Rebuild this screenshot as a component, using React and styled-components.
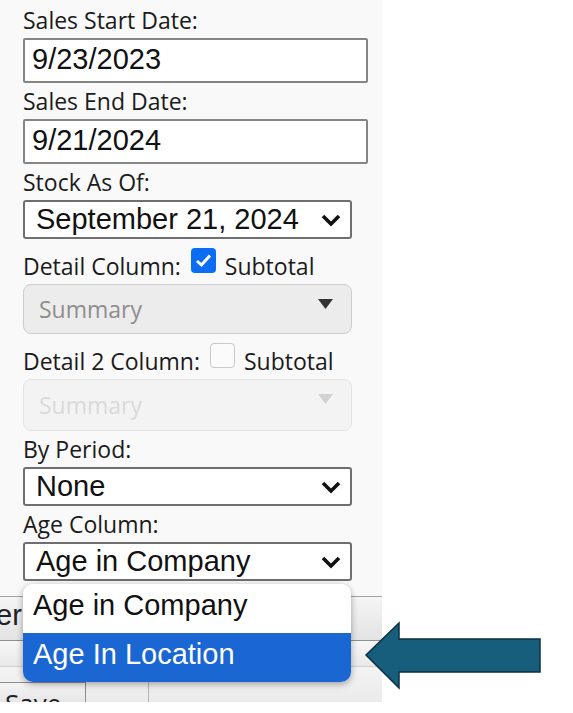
import React from "react";
import styled, { createGlobalStyle } from "styled-components";

const GlobalStyle = createGlobalStyle`
  body {
    margin: 0;
    background: #ffffff;
  }
`;

const Page = styled.div`
  position: relative;
  width: 573px;
  height: 713px;
  overflow: hidden;
  background: #ffffff;
`;

const Panel = styled.div`
  width: 382px;
  height: 702px;
  background: #f9f9f9;
  display: flex;
  flex-direction: column;
  overflow: hidden;
`;

const Form = styled.div`
  display: flex;
  flex-direction: column;
  padding: 7px 0 0 23px;
`;

const Label = styled.div`
  font-family: "Open Sans", "DejaVu Sans", sans-serif;
  font-size: 23px;
  line-height: 27px;
  color: #1b1b1b;
  margin-top: ${(p) => (p.$first ? 0 : 5)}px;
  margin-bottom: 4px;
  white-space: nowrap;
`;

const Check = styled.span`
  display: inline-block;
  vertical-align: baseline;
  box-sizing: border-box;
  width: 25px;
  height: 25px;
  margin: 4px 3px 2px 4px;
  border-radius: 4px;
  background: ${(p) => (p.$on ? "#0b6cf4" : "#fbfbfb")};
  border: ${(p) => (p.$on ? "none" : "1.5px solid #c9c9c9")};
  position: relative;

  svg {
    position: absolute;
    left: 4px;
    top: 5px;
  }
`;

const TextInput = styled.input`
  box-sizing: border-box;
  width: 345px;
  height: 45px;
  margin: 0;
  padding: 0 0 3px 7px;
  border: 2px solid #858585;
  border-radius: 2px;
  background: #ffffff;
  font-family: "Liberation Sans", Arial, sans-serif;
  font-size: 29px;
  color: #111111;
  outline: none;
`;

const SelectWrap = styled.div`
  position: relative;
  width: 329px;
`;

const Select = styled.div`
  box-sizing: border-box;
  width: 329px;
  height: 39px;
  display: flex;
  align-items: center;
  justify-content: space-between;
  padding: 0 8px 0 11px;
  border: 2px solid #6f6f6f;
  border-radius: 3px;
  background: #ffffff;
  font-family: "Liberation Sans", Arial, sans-serif;
  font-size: 29px;
  color: #111111;
  white-space: nowrap;
`;

const DisabledSelect = styled.div`
  box-sizing: border-box;
  width: 329px;
  height: ${(p) => (p.$faint ? 52 : 50)}px;
  display: flex;
  align-items: center;
  justify-content: space-between;
  padding: 0 18px 0 15px;
  border: 1.5px solid ${(p) => (p.$faint ? "#e3e3e3" : "#cdcdcd")};
  border-radius: 8px;
  background: ${(p) => (p.$faint ? "#f3f3f3" : "#ececec")};
  font-family: "Open Sans", "DejaVu Sans", sans-serif;
  font-size: 23px;
  color: ${(p) => (p.$faint ? "#dadada" : "#8e8e8e")};

  svg {
    align-self: flex-start;
    margin-top: 14px;
  }
`;

const Popup = styled.div`
  position: absolute;
  left: 0;
  top: calc(100% + 3px);
  width: 328px;
  border-radius: 10px;
  background: #ffffff;
  box-shadow: 0 2px 7px rgba(0, 0, 0, 0.35);
  overflow: hidden;
  z-index: 2;
`;

const Option = styled.div`
  height: 49px;
  display: flex;
  align-items: center;
  padding: 0 0 7px 10px;
  box-sizing: border-box;
  font-family: "Liberation Sans", Arial, sans-serif;
  font-size: 29px;
  color: ${(p) => (p.$active ? "#ffffff" : "#111111")};
  background: ${(p) => (p.$active ? "#1a66d3" : "#ffffff")};
`;

const Toolbar = styled.div`
  margin-top: 15px;
  border-top: 1px solid #a3a3a3;
  display: flex;
  flex-direction: column;
  flex: 1;
`;

const TabRow = styled.div`
  height: 44px;
  box-sizing: border-box;
  padding-bottom: 6px;
  display: flex;
  align-items: center;
  border-bottom: 1px solid #8f8f8f;
  background: linear-gradient(#f5f5f5, #e3e3e3);
  overflow: hidden;
`;

const TabText = styled.span`
  margin-left: -4px;
  font-family: "Liberation Sans", Arial, sans-serif;
  font-size: 29px;
  color: #222222;
`;

const Strip = styled.div`
  height: 25px;
  border-bottom: 1px solid #cfcfcf;
  background: linear-gradient(#f6f6f6, #e9e9e9);
`;

const ButtonRow = styled.div`
  flex: 1;
  display: flex;
  align-items: flex-start;
  padding-top: 15px;
  background: linear-gradient(#f3f3f3, #e8e8e8);
`;

const SaveButton = styled.div`
  box-sizing: border-box;
  width: 86px;
  height: 30px;
  padding: 5px 0 0 5px;
  border-top: 1px solid #8d8d8d;
  border-right: 1px solid #8d8d8d;
  background: linear-gradient(#f4f4f4, #e0e0e0);
  font-family: "Open Sans", "DejaVu Sans", sans-serif;
  font-size: 26px;
  line-height: 30px;
  color: #222222;
`;

const Divider = styled.div`
  width: 1px;
  height: 30px;
  margin-left: 62px;
  background: #b4b4b4;
`;

const Arrow = styled.svg`
  position: absolute;
  left: 364px;
  top: 621px;
`;

function Chevron() {
  return (
    <svg width="22" height="14" viewBox="0 0 22 14">
      <path d="M3 3 L11 11 L19 3" fill="none" stroke="#111" strokeWidth="3.6" />
    </svg>
  );
}

function Triangle({ color }) {
  return (
    <svg width="15" height="10" viewBox="0 0 15 10">
      <polygon points="0,0 15,0 7.5,10" fill={color} />
    </svg>
  );
}

function Tick() {
  return (
    <svg width="17" height="15" viewBox="0 0 17 15">
      <path d="M2 8 L6.5 12 L15 2.5" fill="none" stroke="#fff" strokeWidth="3" />
    </svg>
  );
}

export default function App() {
  return (
    <Page>
      <GlobalStyle />
      <Panel>
        <Form>
          <Label $first>Sales Start Date:</Label>
          <TextInput readOnly value="9/23/2023" />

          <Label>Sales End Date:</Label>
          <TextInput readOnly value="9/21/2024" />

          <Label>Stock As Of:</Label>
          <Select>
            September 21, 2024
            <Chevron />
          </Select>

          <Label>
            Detail Column:{" "}
            <Check $on>
              <Tick />
            </Check>{" "}
            Subtotal
          </Label>
          <DisabledSelect>
            Summary
            <Triangle color="#333333" />
          </DisabledSelect>

          <Label>
            Detail 2 Column:{" "}
            <Check />{" "}
            Subtotal
          </Label>
          <DisabledSelect $faint>
            Summary
            <Triangle color="#d2d2d2" />
          </DisabledSelect>

          <Label>By Period:</Label>
          <Select>
            None
            <Chevron />
          </Select>

          <Label>Age Column:</Label>
          <SelectWrap>
            <Select>
              Age in Company
              <Chevron />
            </Select>
            <Popup>
              <Option>Age in Company</Option>
              <Option $active>Age In Location</Option>
            </Popup>
          </SelectWrap>
        </Form>

        <Toolbar>
          <TabRow>
            <TabText>er</TabText>
          </TabRow>
          <Strip />
          <ButtonRow>
            <SaveButton>Save</SaveButton>
            <Divider />
          </ButtonRow>
        </Toolbar>
      </Panel>

      <Arrow width="180" height="70" viewBox="0 0 180 70">
        <polygon
          points="2,34 35,2 35,18 176,18 176,51 35,51 35,67"
          fill="#175d7c"
          stroke="#0b3041"
          strokeWidth="1.5"
          strokeLinejoin="miter"
        />
      </Arrow>
    </Page>
  );
}
